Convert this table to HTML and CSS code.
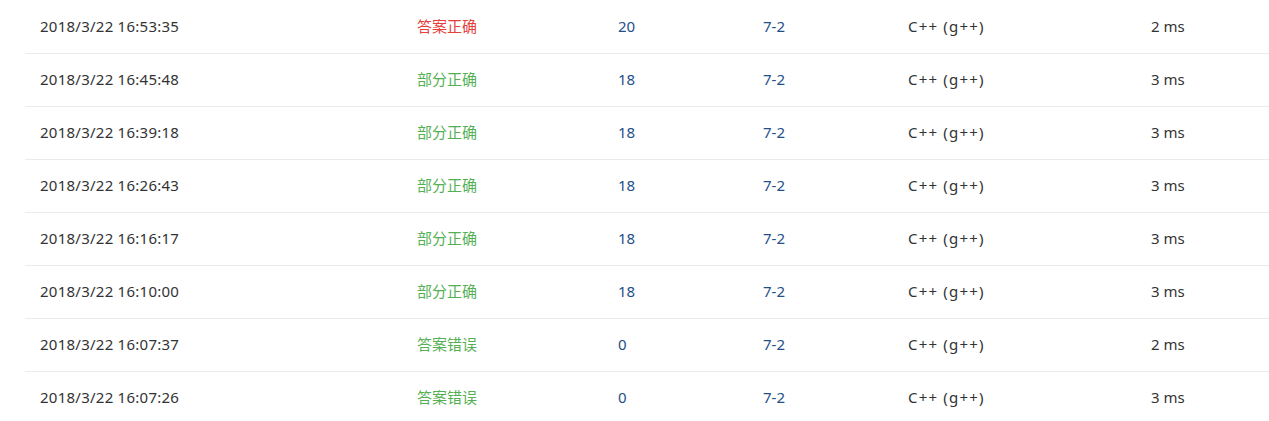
FILE: index.html
```html
<!DOCTYPE html>
<html lang="zh-CN">
<head>
<meta charset="utf-8">
<link rel="stylesheet" href="styles.css">
</head>
<body>
<div class="wrap">
<table class="subs">
  <colgroup>
    <col class="c-time"><col class="c-status"><col class="c-score"><col class="c-prob"><col class="c-lang"><col class="c-run">
  </colgroup>
  <tbody>
    <tr><td class="date">2018/3/22 16:53:35</td><td class="ac">答案正确</td><td class="link">20</td><td class="link">7-2</td><td class="lang">C++ (g++)</td><td>2 ms</td></tr>
    <tr><td class="date">2018/3/22 16:45:48</td><td class="ok">部分正确</td><td class="link">18</td><td class="link">7-2</td><td class="lang">C++ (g++)</td><td>3 ms</td></tr>
    <tr><td class="date">2018/3/22 16:39:18</td><td class="ok">部分正确</td><td class="link">18</td><td class="link">7-2</td><td class="lang">C++ (g++)</td><td>3 ms</td></tr>
    <tr><td class="date">2018/3/22 16:26:43</td><td class="ok">部分正确</td><td class="link">18</td><td class="link">7-2</td><td class="lang">C++ (g++)</td><td>3 ms</td></tr>
    <tr><td class="date">2018/3/22 16:16:17</td><td class="ok">部分正确</td><td class="link">18</td><td class="link">7-2</td><td class="lang">C++ (g++)</td><td>3 ms</td></tr>
    <tr><td class="date">2018/3/22 16:10:00</td><td class="ok">部分正确</td><td class="link">18</td><td class="link">7-2</td><td class="lang">C++ (g++)</td><td>3 ms</td></tr>
    <tr><td class="date">2018/3/22 16:07:37</td><td class="ok">答案错误</td><td class="link">0</td><td class="link">7-2</td><td class="lang">C++ (g++)</td><td>2 ms</td></tr>
    <tr><td class="date">2018/3/22 16:07:26</td><td class="ok">答案错误</td><td class="link">0</td><td class="link">7-2</td><td class="lang">C++ (g++)</td><td>3 ms</td></tr>
  </tbody>
</table>
</div>
</body>
</html>
```
FILE: styles.css
```css
html, body {
  margin: 0;
  padding: 0;
  background: #fff;
}
body {
  font-family: "Noto Sans", "Noto Sans CJK SC", sans-serif;
  font-size: 15px;
  color: #333;
}
.wrap {
  padding-left: 25px;
}
.subs {
  width: 1244px;
  border-collapse: collapse;
  table-layout: fixed;
}
.c-time { width: 377px; }
.c-status { width: 201px; }
.c-score { width: 145px; }
.c-prob { width: 145px; }
.c-lang { width: 243px; }
.c-run { width: 133px; }
.subs td {
  height: 53px;
  padding: 0 15px 1px;
  box-sizing: border-box;
  border-bottom: 1px solid #ebebeb;
  line-height: 20px;
  vertical-align: middle;
  white-space: nowrap;
}
.date { letter-spacing: 0.25px; }
.lang { letter-spacing: 1.2px; }
.ac { color: #e5403a; }
.ok { color: #55b055; }
.link { color: #24508a; }
```
